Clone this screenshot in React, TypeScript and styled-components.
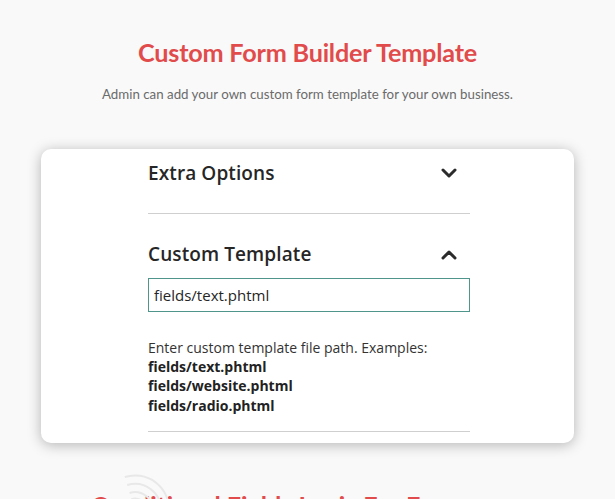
import React from "react";
import styled, { createGlobalStyle } from "styled-components";

const GlobalStyle = createGlobalStyle`
  html, body {
    margin: 0;
    padding: 0;
    background: #f9f9f9;
    overflow: hidden;
  }
`;

const Page = styled.div`
  width: 615px;
  height: 499px;
  display: flex;
  flex-direction: column;
  align-items: center;
  padding-top: 36px;
  box-sizing: border-box;
  background: #f9f9f9;
  overflow: hidden;
`;

const Title = styled.h1`
  margin: 0;
  font-family: Lato, "Liberation Sans", sans-serif;
  font-weight: 700;
  font-size: 25.2px;
  line-height: 32px;
  color: #e14b4b;
  letter-spacing: -0.2px;
  flex-shrink: 0;
`;

const Subtitle = styled.p`
  margin: 16px 0 0;
  font-family: Lato, "Liberation Sans", sans-serif;
  font-size: 13.3px;
  line-height: 20px;
  color: #6b6b6b;
  flex-shrink: 0;
`;

const Card = styled.div`
  margin-top: 45px;
  width: 533px;
  height: 294px;
  flex-shrink: 0;
  box-sizing: border-box;
  background: #fff;
  border-radius: 10px;
  box-shadow: 0 2px 14px rgba(0, 0, 0, 0.28);
  padding-left: 107px;
  overflow: hidden;
`;

const Inner = styled.div`
  width: 322px;
  font-family: "Open Sans", "Liberation Sans", sans-serif;
  color: #262626;
`;

const Section = styled.div<{ $gap?: number }>`
  margin-top: ${(p) => p.$gap ?? 0}px;
  padding-bottom: 16px;
  border-bottom: 1px solid #cfcfcf;
`;

const Header = styled.div`
  height: 48px;
  display: flex;
  align-items: center;
  justify-content: space-between;
`;

const HeaderTitle = styled.span`
  font-size: 19px;
  font-weight: 600;
  letter-spacing: 0.1px;
`;

const Chevron = styled.svg`
  width: 16px;
  height: 12px;
  margin-right: 13px;
`;

const Input = styled.input`
  display: block;
  width: 100%;
  height: 34px;
  box-sizing: border-box;
  border: 1px solid #4f958c;
  outline: none;
  padding: 0 5px;
  font-family: "Open Sans", "Liberation Sans", sans-serif;
  font-size: 15px;
  color: #262626;
  background: #fff;
`;

const Note = styled.div`
  margin-top: 26px;
  font-size: 14px;
  line-height: 19.2px;
  color: #333;
`;

const Path = styled.div`
  font-weight: 700;
  color: #222;
`;

const Next = styled.div`
  position: relative;
  margin-top: 46px;
  width: 100%;
  flex-shrink: 0;
  display: flex;
  justify-content: center;
`;

const NextTitle = styled.h2`
  margin: 0 0 0 -60px;
  font-family: Lato, "Liberation Sans", sans-serif;
  font-weight: 700;
  font-size: 25.2px;
  line-height: 32px;
  color: #e14b4b;
  white-space: nowrap;
`;

const Ripple = styled.svg`
  position: absolute;
  left: 95px;
  top: -22px;
  width: 80px;
  height: 50px;
`;

const ChevronIcon = ({ up }: { up?: boolean }) => (
  <Chevron viewBox="0 0 16 12">
    <polyline
      points={up ? "2,10 8,4 14,10" : "2,3 8,9 14,3"}
      fill="none"
      stroke="#2b2b2b"
      strokeWidth="3"
      strokeLinecap="round"
      strokeLinejoin="round"
    />
  </Chevron>
);

const examples = ["fields/text.phtml", "fields/website.phtml", "fields/radio.phtml"];

export default function App() {
  return (
    <>
      <GlobalStyle />
      <Page>
        <Title>Custom Form Builder Template</Title>
        <Subtitle>
          Admin can add your own custom form template for your own business.
        </Subtitle>
        <Card>
          <Inner>
            <Section>
              <Header>
                <HeaderTitle>Extra Options</HeaderTitle>
                <ChevronIcon />
              </Header>
            </Section>
            <Section $gap={16}>
              <Header>
                <HeaderTitle>Custom Template</HeaderTitle>
                <ChevronIcon up />
              </Header>
              <Input defaultValue="fields/text.phtml" readOnly />
              <Note>
                Enter custom template file path. Examples:
                {examples.map((e) => (
                  <Path key={e}>{e}</Path>
                ))}
              </Note>
            </Section>
          </Inner>
        </Card>
        <Next>
          <Ripple viewBox="0 0 80 50">
            {[10, 18, 26, 34].map((r, i) => (
              <path
                key={r}
                d={`M ${40 - r * 0.3} ${44 - r} A ${r} ${r} 0 0 1 ${40 + r} 44`}
                fill="none"
                stroke="#e8e8e8"
                strokeWidth={i === 0 ? 6 : 2}
              />
            ))}
          </Ripple>
          <NextTitle>Conditional Fields Logic For Form</NextTitle>
        </Next>
      </Page>
    </>
  );
}
